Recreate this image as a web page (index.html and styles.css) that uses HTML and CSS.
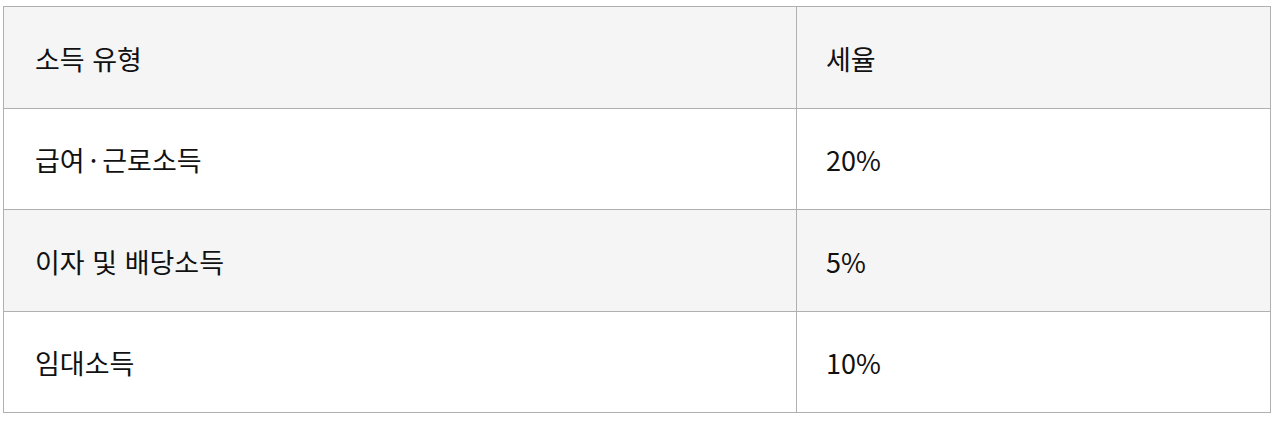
FILE: index.html
```html
<!DOCTYPE html>
<html lang="ko">
<head>
<meta charset="utf-8">
<link rel="stylesheet" href="styles.css">
</head>
<body>
<table class="tax-table">
  <colgroup>
    <col class="col-type">
    <col class="col-rate">
  </colgroup>
  <tbody>
    <tr class="row shaded">
      <td class="cell">소득 유형</td>
      <td class="cell rate">세율</td>
    </tr>
    <tr class="row">
      <td class="cell">급여<span class="dot">·</span>근로소득</td>
      <td class="cell rate">20%</td>
    </tr>
    <tr class="row shaded">
      <td class="cell">이자 및 배당소득</td>
      <td class="cell rate">5%</td>
    </tr>
    <tr class="row">
      <td class="cell">임대소득</td>
      <td class="cell rate">10%</td>
    </tr>
  </tbody>
</table>
</body>
</html>
```

FILE: styles.css
```css
html, body {
  margin: 0;
  background: #ffffff;
}
body {
  padding: 6px 0 0 3px;
  font-family: "Noto Sans CJK KR", "Noto Sans", sans-serif;
  color: #111111;
}
.tax-table {
  border-collapse: collapse;
  width: 1268px;
  table-layout: fixed;
}
.col-type {
  width: 793px;
}
.row {
  height: 101.5px;
}
.shaded {
  background: #f5f5f5;
}
.cell {
  border: 1px solid #b0b0b0;
  padding: 3px 30px 0 31px;
  font-size: 27px;
  line-height: 1.2;
  vertical-align: middle;
}
.rate {
  padding-left: 29px;
}
.dot {
  margin: 0 5px;
}
```
